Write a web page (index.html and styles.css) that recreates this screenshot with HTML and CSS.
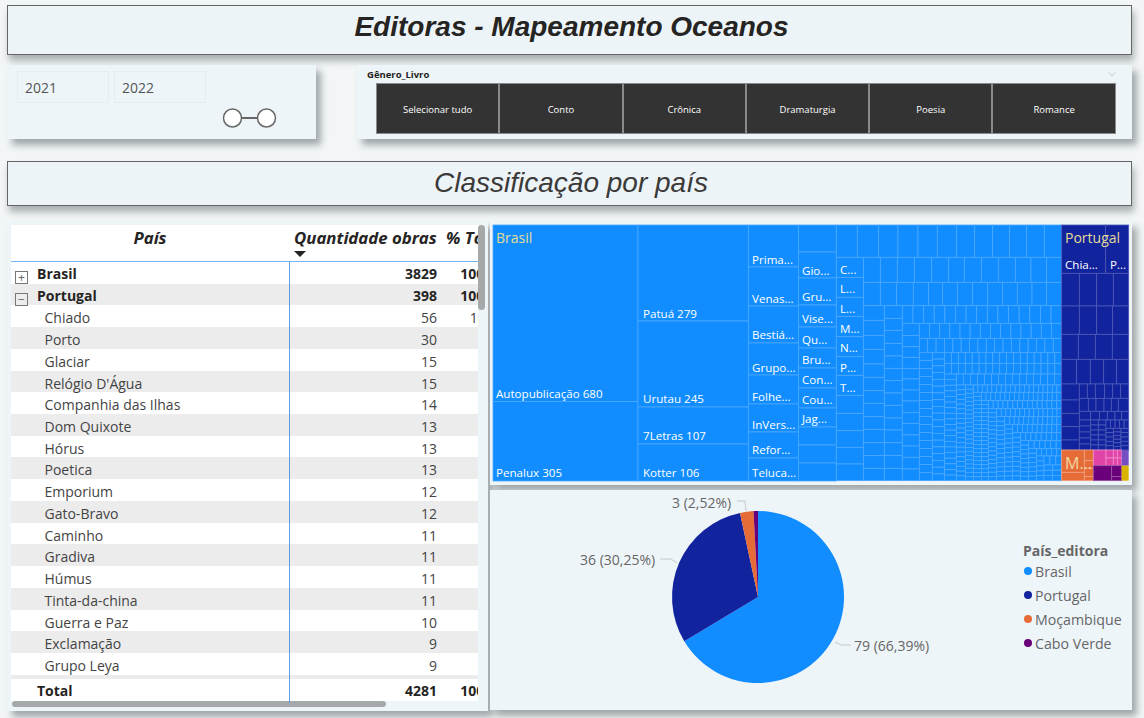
FILE: index.html
```html
<!DOCTYPE html>
<html lang="pt">
<head>
  <meta charset="UTF-8">
  <title>Editoras - Mapeamento Oceanos</title>
  <link rel="stylesheet" href="styles.css">
</head>
<body>
  <div class="page">
    <h1 class="banner banner-main">Editoras - Mapeamento Oceanos</h1>

    <div class="filters">
      <div class="card year-card">
        <div class="year-boxes">
          <div class="year-box">2021</div>
          <div class="year-box">2022</div>
        </div>
        <svg class="slider" width="309" height="24" viewBox="0 0 309 24">
          <line x1="20" y1="12" x2="293" y2="12" stroke="#f2f6f8" stroke-width="2"/>
          <line x1="225" y1="12" x2="259" y2="12" stroke="#666" stroke-width="2"/>
          <circle cx="225.5" cy="12" r="9" fill="#fff" stroke="#666" stroke-width="1.5"/>
          <circle cx="259.5" cy="12" r="9" fill="#fff" stroke="#666" stroke-width="1.5"/>
        </svg>
      </div>
      <div class="card genre-card">
        <div class="genre-head">
          <span class="genre-title">Gênero_Livro</span>
          <svg width="8" height="5" viewBox="0 0 8 5"><path d="M0.5 0.5 L4 4 L7.5 0.5" fill="none" stroke="#b5bbbf" stroke-width="0.8"/></svg>
        </div>
        <div class="genre-buttons">
          <div class="genre-btn">Selecionar tudo</div>
          <div class="genre-btn">Conto</div>
          <div class="genre-btn">Crônica</div>
          <div class="genre-btn">Dramaturgia</div>
          <div class="genre-btn">Poesia</div>
          <div class="genre-btn">Romance</div>
        </div>
      </div>
    </div>

    <h2 class="banner banner-sub">Classificação por país</h2>

    <div class="content">
      <div class="card table-panel">
        <div class="table-wrap">
          <div class="row row-head">
            <div class="cell">País</div>
            <div class="cell cell-qty">Quantidade obras<span class="sort-arrow"></span></div>
            <div class="cell cell-pct">% Total</div>
          </div>
          <div class="rows">
            <div class="row row-bold"><div class="cell"><span class="toggle">+</span>Brasil</div><div class="cell cell-num">3829</div><div class="cell cell-end">100,00%</div></div>
            <div class="row row-bold"><div class="cell"><span class="toggle">−</span>Portugal</div><div class="cell cell-num">398</div><div class="cell cell-end">100,00%</div></div>
            <div class="row"><div class="cell cell-name">Chiado</div><div class="cell cell-num">56</div><div class="cell cell-end">14,07%</div></div>
            <div class="row"><div class="cell cell-name">Porto</div><div class="cell cell-num">30</div><div class="cell cell-end">7,54%</div></div>
            <div class="row"><div class="cell cell-name">Glaciar</div><div class="cell cell-num">15</div><div class="cell cell-end">3,77%</div></div>
            <div class="row"><div class="cell cell-name">Relógio D'Água</div><div class="cell cell-num">15</div><div class="cell cell-end">3,77%</div></div>
            <div class="row"><div class="cell cell-name">Companhia das Ilhas</div><div class="cell cell-num">14</div><div class="cell cell-end">3,52%</div></div>
            <div class="row"><div class="cell cell-name">Dom Quixote</div><div class="cell cell-num">13</div><div class="cell cell-end">3,27%</div></div>
            <div class="row"><div class="cell cell-name">Hórus</div><div class="cell cell-num">13</div><div class="cell cell-end">3,27%</div></div>
            <div class="row"><div class="cell cell-name">Poetica</div><div class="cell cell-num">13</div><div class="cell cell-end">3,27%</div></div>
            <div class="row"><div class="cell cell-name">Emporium</div><div class="cell cell-num">12</div><div class="cell cell-end">3,02%</div></div>
            <div class="row"><div class="cell cell-name">Gato-Bravo</div><div class="cell cell-num">12</div><div class="cell cell-end">3,02%</div></div>
            <div class="row"><div class="cell cell-name">Caminho</div><div class="cell cell-num">11</div><div class="cell cell-end">2,76%</div></div>
            <div class="row"><div class="cell cell-name">Gradiva</div><div class="cell cell-num">11</div><div class="cell cell-end">2,76%</div></div>
            <div class="row"><div class="cell cell-name">Húmus</div><div class="cell cell-num">11</div><div class="cell cell-end">2,76%</div></div>
            <div class="row"><div class="cell cell-name">Tinta-da-china</div><div class="cell cell-num">11</div><div class="cell cell-end">2,76%</div></div>
            <div class="row"><div class="cell cell-name">Guerra e Paz</div><div class="cell cell-num">10</div><div class="cell cell-end">2,51%</div></div>
            <div class="row"><div class="cell cell-name">Exclamação</div><div class="cell cell-num">9</div><div class="cell cell-end">2,26%</div></div>
            <div class="row"><div class="cell cell-name">Grupo Leya</div><div class="cell cell-num">9</div><div class="cell cell-end">2,26%</div></div>
            <div class="row"><div class="cell"></div><div class="cell"></div><div class="cell"></div></div>
          </div>
          <div class="row row-total"><div class="cell cell-total">Total</div><div class="cell cell-num">4281</div><div class="cell cell-end">100,00%</div></div>
          <div class="hscroll"><div class="hscroll-thumb"></div></div>
        </div>
        <div class="vscroll"></div>
      </div>

      <div class="charts">
        <div class="card treemap-panel">
          <svg id="treemap" class="treemap" width="642" height="264" viewBox="490 221 642 264">
            <g id="cells"></g>
            <g class="tm-head">
              <text x="496" y="243">Brasil</text>
              <text x="1065" y="243">Portugal</text>
              <text class="tm-big" x="1065" y="469">M...</text>
            </g>
            <g class="tm-label">
              <text x="496" y="398">Autopublicação 680</text>
              <text x="496" y="477">Penalux 305</text>
              <text x="643" y="318">Patuá 279</text>
              <text x="643" y="403">Urutau 245</text>
              <text x="643" y="440">7Letras 107</text>
              <text x="643" y="477">Kotter 106</text>
              <text x="752" y="264">Prima...</text>
              <text x="752" y="303">Venas...</text>
              <text x="752" y="339">Bestiá...</text>
              <text x="752" y="372">Grupo...</text>
              <text x="752" y="401">Folhe...</text>
              <text x="752" y="429">InVers...</text>
              <text x="752" y="454">Refor...</text>
              <text x="752" y="477">Teluca...</text>
              <text x="802" y="275">Gio...</text>
              <text x="802" y="301">Gru...</text>
              <text x="802" y="323">Vise...</text>
              <text x="802" y="344">Qu...</text>
              <text x="802" y="364">Bru...</text>
              <text x="802" y="384">Con...</text>
              <text x="802" y="404">Cou...</text>
              <text x="802" y="423">Jag...</text>
              <text x="840" y="274">C...</text>
              <text x="840" y="293">L...</text>
              <text x="840" y="313">L...</text>
              <text x="840" y="333">M...</text>
              <text x="840" y="352">N...</text>
              <text x="840" y="372">P...</text>
              <text x="840" y="392">T...</text>
              <text x="1065" y="269">Chia...</text>
              <text x="1110" y="269">P...</text>
            </g>
          </svg>
        </div>

        <div class="card pie-panel">
          <svg class="pie" width="500" height="220" viewBox="560 490 500 220">
            <path d="M758 597 L758 511 A86 86 0 1 1 684.3 641.3 Z" fill="#118dff"/>
            <path d="M758 597 L684.3 641.3 A86 86 0 0 1 740 512.9 Z" fill="#12239e"/>
            <path d="M758 597 L740 512.9 A86 86 0 0 1 753.5 511.1 Z" fill="#e66c37"/>
            <path d="M758 597 L753.5 511.1 A86 86 0 0 1 758 511 Z" fill="#6b007b"/>
            <g class="pie-lead">
              <path d="M835 642 L841 645 L851 645"/>
              <path d="M660 559 L671 559 L677 563"/>
              <path d="M737 501 L745 501 L746 511"/>
            </g>
            <g class="pie-text">
              <text x="854" y="651">79 (66,39%)</text>
              <text x="580" y="565">36 (30,25%)</text>
              <text x="672" y="508">3 (2,52%)</text>
            </g>
          </svg>
          <div class="legend">
            <div class="legend-title">País_editora</div>
            <div class="legend-item"><span class="dot dot-br"></span>Brasil</div>
            <div class="legend-item"><span class="dot dot-pt"></span>Portugal</div>
            <div class="legend-item"><span class="dot dot-mz"></span>Moçambique</div>
            <div class="legend-item"><span class="dot dot-cv"></span>Cabo Verde</div>
          </div>
        </div>
      </div>
    </div>
  </div>
  <script src="script.js"></script>
</body>
</html>
```

FILE: styles.css
```css
* {
  margin: 0;
  padding: 0;
  box-sizing: border-box;
}

body {
  width: 1144px;
  height: 718px;
  overflow: hidden;
  background: #f3f6f7;
  font-family: "Open Sans", "Noto Sans", sans-serif;
  color: #444;
}

.page {
  padding: 5px 12px 0 7px;
}

.card {
  background: #eef5f9;
  box-shadow: 5px 6px 7px rgba(60, 70, 75, 0.45);
}

.banner {
  display: flex;
  align-items: center;
  justify-content: center;
  background: #edf4f8;
  border: 1px solid #666;
  box-shadow: 2px 6px 7px rgba(60, 70, 75, 0.4);
  font-family: "Liberation Sans", Arial, sans-serif;
  font-style: italic;
  color: #252423;
}

.banner-main {
  height: 50px;
  padding: 0 0 6px 4px;
  font-size: 28px;
  font-weight: 700;
}

.banner-sub {
  height: 45px;
  margin-top: 22px;
  padding: 0 0 2px 3px;
  font-size: 28px;
  font-weight: 400;
  color: #3b3a39;
}

/* filtros */
.filters {
  display: flex;
  justify-content: space-between;
  height: 74px;
  margin-top: 10px;
}

.year-card {
  width: 309px;
  padding: 6px 0 0 10px;
}

.year-boxes {
  display: flex;
  gap: 5px;
}

.year-box {
  width: 92px;
  height: 32px;
  padding-left: 7px;
  border: 1px solid #e6edf1;
  font-size: 14px;
  line-height: 31px;
  color: #555;
}

.slider {
  display: block;
  margin: 3px 0 0 -10px;
}

.genre-card {
  width: 775px;
  padding: 3px 16px 0 10px;
}

.genre-head {
  display: flex;
  align-items: center;
  justify-content: space-between;
  height: 13px;
}

.genre-title {
  font-size: 9.5px;
  font-weight: 700;
  color: #252423;
}

.genre-buttons {
  display: grid;
  grid-template-columns: repeat(6, 123.3px);
  height: 51px;
  margin: 2px 0 0 9px;
}

.genre-btn {
  display: flex;
  align-items: center;
  justify-content: center;
  padding-top: 2px;
  background: #333;
  border: 1px solid #8a8a8a;
  font-size: 9.5px;
  color: #fff;
}

/* parte de baixo */
.content {
  display: flex;
  gap: 2px;
  height: 490px;
  margin-top: 15px;
}

.table-panel {
  display: flex;
  width: 481px;
  padding: 4px 0 0 4px;
}

.table-wrap {
  width: 467px;
  overflow: hidden;
}

.vscroll {
  width: 7px;
  height: 85px;
  border-radius: 4px;
  background: #a6a9aa;
}

.row {
  display: grid;
  grid-template-columns: 278px 152px 81px;
  width: 511px;
  height: 21.72px;
  font-size: 14px;
  line-height: 25px;
  white-space: nowrap;
}

.rows {
  height: 417px;
  overflow: hidden;
  background: #fff;
}

.rows .row:nth-child(even) {
  background: #ececec;
}

.row .cell:nth-child(2) {
  border-left: 1px solid #5e9ee0;
}

.row-head {
  height: 37px;
  background: #fff;
  border-bottom: 1px solid #74b4f0;
  font-size: 16.8px;
  font-weight: 700;
  font-style: italic;
  color: #252423;
}

.row-head .cell:first-child {
  text-align: center;
  line-height: 26px;
}

.row-head .cell:nth-child(2) {
  border-left: none;
}

.cell-qty {
  position: relative;
  padding-left: 5px;
  line-height: 26px;
}

.cell-pct {
  padding-left: 5px;
  line-height: 26px;
}

.sort-arrow {
  position: absolute;
  left: 5px;
  top: 26px;
  border-left: 6px solid transparent;
  border-right: 6px solid transparent;
  border-top: 6px solid #252423;
}

.row-bold {
  font-weight: 700;
  line-height: 24px;
  color: #252423;
}

.toggle {
  display: inline-block;
  width: 13px;
  height: 13px;
  margin: 0 9px 0 4px;
  border: 1px solid #777;
  font-size: 12px;
  font-weight: 400;
  line-height: 11px;
  text-align: center;
  color: #666;
  vertical-align: -3px;
}

.cell-name {
  padding-left: 33.5px;
}

.cell-num {
  padding-right: 4px;
  text-align: right;
}

.cell-end {
  padding-right: 5px;
  text-align: right;
}

.row-total {
  background: #fff;
  font-weight: 700;
  line-height: 24px;
  color: #252423;
}

.cell-total {
  padding-left: 26px;
}

.hscroll {
  height: 6px;
}

.hscroll-thumb {
  width: 374px;
  height: 6px;
  margin-left: 1px;
  border-radius: 3px;
  background: #a6a9aa;
}

/* graficos */
.charts {
  display: flex;
  flex-direction: column;
  gap: 5px;
  width: 642px;
}

.treemap-panel {
  height: 264px;
}

.treemap {
  display: block;
}

.tm-label text {
  font-size: 11.6px;
  font-weight: 500;
  fill: #fff;
}

.tm-head text {
  font-size: 14px;
  fill: #e3dc96;
}

.tm-head .tm-big {
  font-size: 16px;
  fill: #f3d9a5;
}

.pie-panel {
  display: flex;
  height: 220px;
}

.pie {
  flex: none;
  display: block;
  margin-left: 70px;
}

.pie-lead path {
  fill: none;
  stroke: #c4c8ca;
  stroke-width: 1;
}

.pie-text text {
  font-size: 14px;
  fill: #666;
}

.legend {
  margin: 51px 0 0 -37px;
  font-size: 14.2px;
  color: #666;
}

.legend-title {
  height: 18px;
  font-size: 14px;
  font-weight: 700;
  line-height: 20px;
}

.legend-item {
  display: flex;
  align-items: center;
  height: 24px;
}

.dot {
  width: 8px;
  height: 8px;
  margin: 0 3px 0 1px;
  border-radius: 50%;
}

.dot-br { background: #118dff; }
.dot-pt { background: #12239e; }
.dot-mz { background: #e66c37; }
.dot-cv { background: #6b007b; }
```

FILE: script.js
```js
const NS = "http://www.w3.org/2000/svg";
const cells = document.getElementById("cells");
const BLUE = "#118dff", NAVY = "#12239e", ORANGE = "#e66c37", PINK = "#e044a7", PURPLE = "#6b007b";

const strokes = {};
strokes[BLUE] = "#4ba8ff";
strokes[NAVY] = "#4c59b8";
strokes[ORANGE] = "#f0a080";
strokes[PINK] = "#f08ccc";
strokes[PURPLE] = "#9a55a5";

// coordenadas da pagina
const rect = (x0, y0, x1, y1, fill) => {
  const r = document.createElementNS(NS, "rect");
  r.setAttribute("x", x0);
  r.setAttribute("y", y0);
  r.setAttribute("width", x1 - x0);
  r.setAttribute("height", y1 - y0);
  r.setAttribute("fill", fill);
  r.setAttribute("stroke", strokes[fill] || "none");
  r.setAttribute("stroke-width", 0.8);
  cells.appendChild(r);
};

const X = v => 820 + v / 3;
const Y = v => 220 + v / 3;
const even = (a, b, n) => Array.from({ length: n + 1 }, (_, i) => a + (b - a) * i / n);

const row = (y0, y1, xs, fill = BLUE) => {
  for (let i = 0; i < xs.length - 1; i++) rect(X(xs[i]), Y(y0), X(xs[i + 1]), Y(y1), fill);
};
const col = (x0, x1, ys, fill = BLUE) => {
  for (let i = 0; i < ys.length - 1; i++) rect(X(x0), Y(ys[i]), X(x1), Y(ys[i + 1]), fill);
};

// colunas grandes do Brasil
const bigCol = (x0, x1, ys) => {
  for (let i = 0; i < ys.length - 1; i++) rect(x0, ys[i], x1, ys[i + 1], BLUE);
};
bigCol(493, 638, [225, 401.5, 481]);
bigCol(638, 748.5, [225, 321, 407, 444, 481]);
bigCol(748.5, 798.5, [225, 267, 306, 343, 375, 404, 432, 458, 481]);
bigCol(798.5, 836.3, [225, 252, 278, 305, 327, 348, 368, 388, 408, 427, 445, 463, 481]);

// o resto do Brasil, em espiral
row(15, 112, [49, 112, 176, 234, 294, 352, 410, 464, 518, 569, 620, 673, 725]);
row(112, 187, [130, 181, 232, 283, 335, 386, 433, 484, 535, 586, 633, 680, 725]);
row(187, 257, [130, 181, 230, 280, 326, 368, 412, 458, 503, 548, 592, 636, 680, 725]);
col(49, 130, [112, 172, 232, 290, 350, 410, 466, 526, 580, 632, 682, 732, 782]);
col(130, 193, [257, 301, 346, 388, 432, 472, 512, 550, 590, 628, 668, 707, 745, 782]);
col(193, 247, [257, 295, 331, 370, 408, 445, 482, 519, 556, 594, 630, 668, 706, 745, 782]);
row(257, 310, even(247, 725, 15));
col(247, 298, [310, 347, 380, 412, 445, 477, 510, 543, 578, 610, 645, 678, 712, 747, 782]);
row(310, 355, even(298, 725, 14));
row(355, 397, even(298, 725, 17));
col(298, 337, even(397, 782, 16));
col(337, 374, even(397, 782, 19));
row(397, 430, even(374, 725, 17));
row(430, 462, even(374, 725, 17));
col(374, 409, even(462, 782, 19));
row(462, 495, even(409, 725, 15));
col(409, 436, even(495, 782, 20));
col(436, 460, even(495, 782, 23));
row(495, 517, even(460, 725, 19));
col(460, 484, even(517, 782, 22));
row(517, 542, even(484, 725, 17));
col(484, 505, even(542, 782, 20));
row(542, 566, even(505, 725, 15));
col(505, 530, even(566, 782, 17));
row(566, 590, even(530, 725, 14));
col(530, 554, even(590, 782, 14));
row(590, 613, even(554, 725, 12));
col(554, 578, even(613, 782, 12));
row(613, 638, even(578, 725, 10));
col(578, 602, even(638, 782, 10));
row(638, 662, even(602, 725, 8));
col(602, 626, even(662, 782, 9));
row(662, 686, even(626, 725, 6));
col(626, 650, even(686, 782, 7));
row(686, 708, even(650, 725, 5));
col(650, 672, even(708, 782, 5));
row(708, 735, even(672, 725, 3));
col(672, 698, even(735, 782, 3));
col(698, 725, even(735, 782, 3));

// Portugal
row(15, 160, [725, 857, 926], NAVY);
row(160, 258, [725, 778, 830, 880, 926], NAVY);
row(258, 343, [725, 778, 830, 878, 926], NAVY);
row(343, 418, [725, 775, 826, 877, 926], NAVY);
row(418, 492, [725, 770, 811, 851, 890, 926], NAVY);
col(725, 778, [492, 540, 580, 620, 660, 690], NAVY);
row(492, 535, [778, 802, 826, 854, 878, 902, 926], NAVY);
row(535, 574, [778, 805, 828, 852, 874, 895, 926], NAVY);
row(574, 600, [778, 812, 838, 862, 885, 905, 926], NAVY);
col(778, 812, even(600, 690, 5), NAVY);
col(812, 835, even(600, 690, 6), NAVY);
col(835, 858, even(600, 690, 6), NAVY);
row(600, 625, even(858, 926, 5), NAVY);
col(858, 880, even(625, 690, 5), NAVY);
col(880, 903, even(625, 690, 6), NAVY);
col(903, 926, even(625, 690, 5), NAVY);

// demais paises
rect(X(725), Y(690), X(793), Y(757), ORANGE);
rect(X(725), Y(757), X(793), Y(782), ORANGE);
col(793, 820, [690, 722, 745, 770, 782], ORANGE);
rect(X(820), Y(690), X(858), Y(737), PINK);
row(690, 714, [858, 880, 892, 905], PINK);
row(714, 737, [858, 880, 892, 905], PINK);
rect(X(820), Y(737), X(875), Y(782), PURPLE);
col(875, 905, [737, 770, 782], PURPLE);
rect(X(905), Y(690), X(926), Y(737), "#744ec2");
rect(X(905), Y(737), X(926), Y(782), "#d9b300");
```
